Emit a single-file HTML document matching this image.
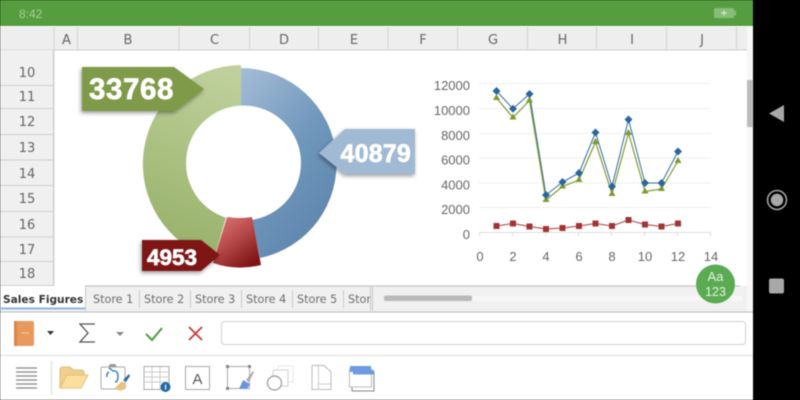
<!DOCTYPE html>
<html><head><meta charset="utf-8"><style>
html,body{margin:0;padding:0;background:#000;width:800px;height:400px;overflow:hidden}
#m{display:block;filter:blur(.55px)}
text{font-family:"DejaVu Sans","Liberation Sans",sans-serif}
.h{font-size:13px;fill:#666;text-anchor:middle}
.t{font-size:11.2px;fill:#6e6e6e}
.a{font-family:"Liberation Sans",sans-serif;font-size:13px;fill:#666}
.l{font-family:"Liberation Sans",sans-serif;font-weight:bold;fill:#fff;stroke:#fff;stroke-width:.7px}
</style></head><body>
<svg id="m" width="800" height="400" viewBox="0 0 800 400" xmlns="http://www.w3.org/2000/svg">
<defs>
<linearGradient id="gb" x1="0" y1="0" x2="0.6" y2="1"><stop offset="0" stop-color="#a5bdd6"/><stop offset=".55" stop-color="#7097bc"/><stop offset="1" stop-color="#5f86ad"/></linearGradient>
<linearGradient id="gg" x1="0.6" y1="0" x2="0.4" y2="1"><stop offset="0" stop-color="#bfd09c"/><stop offset=".6" stop-color="#a6bd7c"/><stop offset="1" stop-color="#97b06a"/></linearGradient>
<linearGradient id="gr" x1="0" y1="0" x2="0.7" y2="1"><stop offset="0" stop-color="#e07d7d"/><stop offset=".5" stop-color="#b84a4a"/><stop offset="1" stop-color="#7e1414"/></linearGradient>
<filter id="sh" x="-20%" y="-20%" width="140%" height="150%"><feDropShadow dx="-1" dy="2" stdDeviation="2" flood-color="#000" flood-opacity=".4"/></filter>
<clipPath id="tc"><rect x="348" y="286" width="22" height="26"/></clipPath>
</defs>
<rect width="800" height="400" fill="#000"/>
<rect width="753" height="400" fill="#fff"/>
<rect width="753" height="26" fill="#559d3f"/>
<text x="19" y="18" font-size="12" fill="#a6cf9a" style='font-family:"Liberation Sans",sans-serif'>8:42</text>
<rect x="714" y="8" width="20" height="10" rx="1.5" fill="#87bd78"/><rect x="734" y="10.5" width="2" height="5" fill="#87bd78"/>
<path d="M721 13h6M724 10.5v5" stroke="#d5e8cf" stroke-width="1.3"/>

<!-- column header -->
<rect y="27" width="747" height="23" fill="#eee"/>
<rect y="49.5" width="747" height="1" fill="#ccc"/>
<path d="M54 27V286M77.500 27V49M179 27V49M249.500 27V49M318.500 27V49M388 27V49M457.500 27V49M527.500 27V49M596.500 27V49M666.500 27V49M736.500 27V49" stroke="#d2d2d2" fill="none"/>
<text class="h" x="66.500" y="44">A</text><text class="h" x="128" y="44">B</text><text class="h" x="214.500" y="44">C</text><text class="h" x="284" y="44">D</text><text class="h" x="354" y="44">E</text><text class="h" x="423" y="44">F</text><text class="h" x="493" y="44">G</text><text class="h" x="562.500" y="44">H</text><text class="h" x="632" y="44">I</text><text class="h" x="702" y="44">J</text>

<!-- row header -->
<rect y="50" width="54" height="236" fill="#f0f0f0"/>
<path d="M0 85.500H54M0 108.500H54M0 134.500H54M0 160H54M0 185.500H54M0 211.500H54M0 237H54M0 261.500H54M0 285.500H54" stroke="#d0d0d0"/>
<path d="M53.500 50V286" stroke="#ccc"/>
<text class="h" x="27" y="77">10</text><text class="h" x="27" y="101">11</text><text class="h" x="27" y="126">12</text><text class="h" x="27" y="152">13</text><text class="h" x="27" y="178">14</text><text class="h" x="27" y="203">15</text><text class="h" x="27" y="229">16</text><text class="h" x="27" y="254">17</text><text class="h" x="27" y="278">18</text>

<!-- donut -->
<path d="M241 68A96 96 0 0 1 260 258L241 164Z" fill="url(#gb)"/>
<path d="M241 65V165L214 259A99 99 0 0 1 241 65Z" fill="url(#gg)"/>
<circle cx="243.500" cy="163" r="57.500" fill="#fff"/>
<path d="M227 217Q240 219 252 217L261 265Q236 271 213 263Z" fill="url(#gr)"/>
<polygon points="82,67 174,67 204,89 175,111 82,111" fill="#7f9a48" filter="url(#sh)"/>
<text class="l" x="89" y="99" font-size="29.500" letter-spacing=".6">33768</text>
<polygon points="319,153 345,129 415,129 415,174 345,174" fill="#a0bad3" filter="url(#sh)"/>
<text class="l" x="340.500" y="162" font-size="25" letter-spacing=".2">40879</text>
<polygon points="142,240 201,240 220,255 201,271 142,271" fill="#7f1515" filter="url(#sh)"/>
<text class="l" x="147" y="265" font-size="22.500">4953</text>

<!-- line chart -->
<path d="M479 83.500H711M479 108.500H711M479 133.500H711M479 158H711M479 183H711M479 207.500H711" stroke="#eee"/>
<path d="M479 232.500H711" stroke="#ddd"/>
<path d="M479.500 232v4M512.500 232v4M545.500 232v4M578.500 232v4M611.500 232v4M644.500 232v4M677.500 232v4M710.500 232v4" stroke="#ddd"/>
<text class="a" x="470" y="90" text-anchor="end">12000</text><text class="a" x="470" y="115" text-anchor="end">10000</text><text class="a" x="470" y="140" text-anchor="end">8000</text><text class="a" x="470" y="164.500" text-anchor="end">6000</text><text class="a" x="470" y="189.500" text-anchor="end">4000</text><text class="a" x="470" y="214" text-anchor="end">2000</text><text class="a" x="470" y="239" text-anchor="end">0</text>
<text class="a" x="480" y="261" text-anchor="middle">0</text><text class="a" x="513" y="261" text-anchor="middle">2</text><text class="a" x="546" y="261" text-anchor="middle">4</text><text class="a" x="579" y="261" text-anchor="middle">6</text><text class="a" x="612" y="261" text-anchor="middle">8</text><text class="a" x="645" y="261" text-anchor="middle">10</text><text class="a" x="678" y="261" text-anchor="middle">12</text><text class="a" x="711" y="261" text-anchor="middle">14</text>
<polyline fill="none" stroke="#2f6ba3" stroke-width="1" points="496.500,91 513,108.700 529.500,94 546,195 562.500,182 579,173 595.500,132.500 612,186.500 628.500,119.500 645,183 661.500,183 678,151.500"/>
<polyline fill="none" stroke="#7d9a2e" stroke-width="1.200" points="496.500,98 513,117.500 529.500,100.500 546,200 562.500,186.500 579,180 595.500,142 612,194 628.500,133 645,191.500 661.500,189 678,161"/>
<polyline fill="none" stroke="#a83c3c" stroke-width="1" points="496.500,226 513,223.500 529.500,226.500 546,229 562.500,228 579,226 595.500,223.500 612,226 628.500,220 645,224.500 661.500,226.500 678,223.500"/>
<path fill="#7d9a2e" d="M496.500 94l3.500 6h-7zM513 113.500l3.500 6h-7zM529.500 96.500l3.500 6h-7zM546 196l3.500 6h-7zM562.500 182.500l3.500 6h-7zM579 176l3.500 6h-7zM595.500 138l3.500 6h-7zM612 190l3.500 6h-7zM628.500 129l3.500 6h-7zM645 187.500l3.500 6h-7zM661.500 185l3.500 6h-7zM678 157l3.500 6h-7z"/>
<path fill="#2a659f" d="M496.500 87l4 4-4 4-4-4zM513 104.700l4 4-4 4-4-4zM529.500 90l4 4-4 4-4-4zM546 191l4 4-4 4-4-4zM562.500 178l4 4-4 4-4-4zM579 169l4 4-4 4-4-4zM595.500 128.500l4 4-4 4-4-4zM612 182.500l4 4-4 4-4-4zM628.500 115.500l4 4-4 4-4-4zM645 179l4 4-4 4-4-4zM661.500 179l4 4-4 4-4-4zM678 147.500l4 4-4 4-4-4z"/>
<g fill="#a33434"><rect x="493.500" y="223" width="6" height="6"/><rect x="510" y="220.500" width="6" height="6"/><rect x="526.500" y="223.500" width="6" height="6"/><rect x="543" y="226" width="6" height="6"/><rect x="559.500" y="225" width="6" height="6"/><rect x="576" y="223" width="6" height="6"/><rect x="592.500" y="220.500" width="6" height="6"/><rect x="609" y="223" width="6" height="6"/><rect x="625.500" y="217" width="6" height="6"/><rect x="642" y="221.500" width="6" height="6"/><rect x="658.500" y="223.500" width="6" height="6"/><rect x="675" y="220.500" width="6" height="6"/></g>

<!-- right scrollbar -->
<rect x="747" y="27" width="6" height="286" fill="#f7f7f7"/>
<rect x="747" y="80" width="5.500" height="47" fill="#bbb"/>

<!-- sheet tabs -->
<rect y="286" width="747" height="26" fill="#f0f0f0"/>
<path d="M0 312H753" stroke="#bbb"/>
<path d="M85 286H740" stroke="#bbb"/>
<rect x="1" y="286" width="84" height="24" fill="#fff"/>
<rect x="1" y="307.500" width="84" height="2" fill="#8fb1e4"/>
<text x="3" y="303" font-size="10.600" font-weight="bold" fill="#333">Sales Figures</text>
<text class="t" x="93" y="303">Store 1</text>
<text class="t" x="144" y="303">Store 2</text>
<text class="t" x="195" y="303">Store 3</text>
<text class="t" x="246" y="303">Store 4</text>
<text class="t" x="297" y="303">Store 5</text>
<text class="t" x="348" y="303" clip-path="url(#tc)">Store 6</text>
<path d="M139.500 290v18M190.500 290v18M241.500 290v18M292.500 290v18M343.500 290v18" stroke="#ccc"/>
<path d="M85.500 287V311M370.500 287V311M372.500 287V311" stroke="#c8c8c8"/>
<rect x="384" y="296" width="359" height="5" rx="2" fill="#f7f7f7"/>
<rect x="384" y="295.500" width="88" height="5.500" rx="2" fill="#b9b9b9"/>

<!-- Aa 123 -->
<circle cx="715.500" cy="284" r="19.500" fill="#5aab52"/>
<text x="715.500" y="281" font-size="13" fill="#e6f3e3" text-anchor="middle" style='font-family:"Liberation Sans",sans-serif'>Aa</text>
<text x="715.500" y="296" font-size="12.500" fill="#e6f3e3" text-anchor="middle" style='font-family:"Liberation Sans",sans-serif'>123</text>

<!-- formula bar -->
<rect y="313" width="753" height="42" fill="#fff"/>
<path d="M0 355.500H753" stroke="#ddd"/>
<rect x="14" y="321" width="20" height="25" rx="2" fill="#e89a5e"/>
<rect x="14" y="321" width="3" height="25" fill="#d9854a"/>
<path d="M22 333h7" stroke="#f8dcc5" stroke-dasharray="1.500 1" stroke-width="1.300"/>
<path d="M47 331h7l-3.500 4z" fill="#333"/>
<path d="M95 324H80L88 333L80 342H95" fill="none" stroke="#555" stroke-width="1.300"/>
<path d="M116 332h8l-4 4z" fill="#888"/>
<path d="M146 334L152 340L162 328" fill="none" stroke="#4f9e3a" stroke-width="2"/>
<path d="M189 327L202 340M202 327L189 340" fill="none" stroke="#c63a3a" stroke-width="1.800"/>
<rect x="221.500" y="321.500" width="524" height="23" rx="3" fill="#fff" stroke="#d0d0d0"/>

<!-- toolbar -->
<path d="M16 368H37M16 372H37M16 376H37M16 380H37M16 384H37M16 388H37" stroke="#888" stroke-width="1.300"/>
<path d="M51.500 361V395" stroke="#ddd" stroke-width="1.200"/>
<path d="M60 387V370Q60 367 63 367H70L73 370H81Q84 370 84 373V375H68L60 387Z" fill="#f0cf8e" stroke="#e1b96e"/>
<path d="M60 388L67 375H88L81 388Z" fill="#fbdf9f" stroke="#e6bf78"/>
<rect x="101" y="367" width="24" height="22" rx="1.500" fill="#fff" stroke="#aaa"/>
<path d="M108 367l2-3h5l2 3z" fill="#999"/>
<path d="M107 377q-1-3 2-5M109 368l3 2M112 371q6-1 6 5t-3 6" fill="none" stroke="#2a7bb5" stroke-width="1.400"/>
<path d="M115 388l7-7 5 5-6 5-6-2z" fill="#e8c37e"/>
<path d="M123 380l6-6 1 2-4 6z" fill="#2a6fa8"/>
<rect x="144" y="366.500" width="25" height="23" fill="#fff" stroke="#aaa"/>
<path d="M144 372H169M144 377H169M144 382H169M152 367V389M160 367V389" stroke="#ccc"/>
<circle cx="165.500" cy="387" r="5" fill="#1f6aa8"/>
<rect x="165" y="384.500" width="1.200" height="5" fill="#fff"/>
<rect x="185.500" y="366.500" width="24" height="23" fill="#fff" stroke="#aaa"/>
<text x="197.500" y="384" font-size="15" fill="#555" text-anchor="middle" style='font-family:"Liberation Sans",sans-serif'>A</text>
<rect x="227.500" y="366.500" width="22" height="22" fill="none" stroke="#aaa"/>
<path d="M226 365h3v3h-3zM248 365h3v3h-3zM226 387h3v3h-3z" fill="#888"/>
<path d="M239 389L243 380L250 384L247 389Z" fill="#6a94dc"/>
<path d="M246 380l7-9 1 1-5 10z" fill="#aaa"/>
<rect x="278" y="366" width="15" height="16" fill="#fff" stroke="#e6e6e6"/>
<rect x="273" y="370" width="15" height="16" fill="#fff" stroke="#d0d0d0"/>
<circle cx="274.500" cy="383" r="7" fill="#fff" stroke="#999" stroke-width="1.200"/>
<path d="M312 365.500H324L331 372V389.500H312Z" fill="#fff" stroke="#bbb"/>
<path d="M318.500 366V389.500M318.500 384H331" stroke="#ccc" fill="none"/>
<rect x="352" y="372" width="22" height="19" fill="#fff" stroke="#888"/>
<rect x="349.500" y="369" width="22" height="18" fill="#fff" stroke="#bbb"/>
<rect x="350" y="366" width="21" height="6" fill="#6d9ae2"/>
<rect x="353" y="370" width="21" height="4.500" fill="#6d9ae2"/>

<!-- nav bar -->
<rect x="753" width="47" height="400" fill="#000"/>
<path d="M769 113.500L784 105V122Z" fill="#a8a8a8"/>
<circle cx="777" cy="200" r="9.500" fill="none" stroke="#a8a8a8" stroke-width="1.500"/>
<circle cx="777" cy="200" r="6.200" fill="#a8a8a8"/>
<rect x="769" y="278.500" width="15" height="15" rx="2" fill="#a8a8a8"/>
</svg>
</body></html>
